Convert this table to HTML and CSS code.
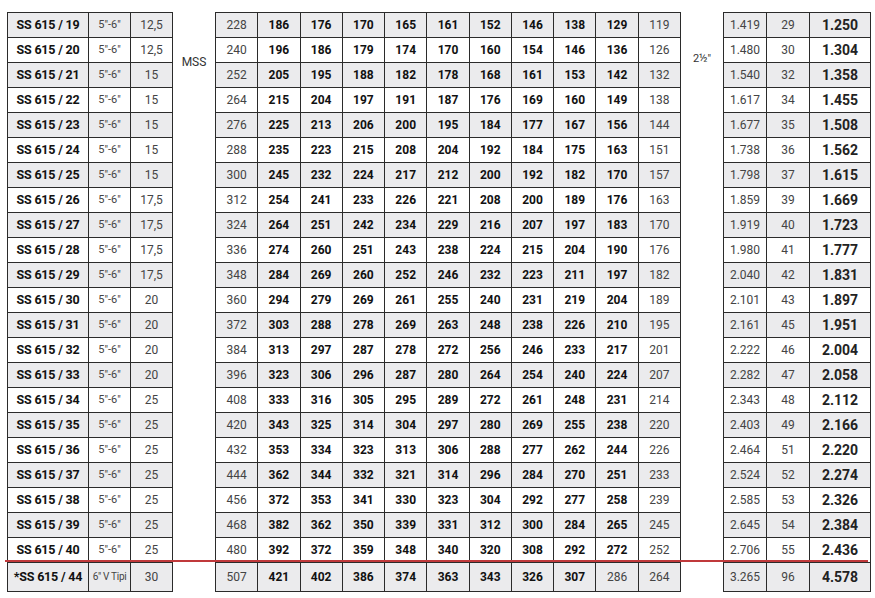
FILE: index.html
```html
<!DOCTYPE html>
<html>
<head>
<meta charset="utf-8">
<link rel="stylesheet" href="styles.css">
</head>
<body>
<div class="page">
  <table class="grid t1">
    <tr><td>SS 615 / 19</td><td>5"-6"</td><td>12,5</td></tr>
    <tr><td>SS 615 / 20</td><td>5"-6"</td><td>12,5</td></tr>
    <tr><td>SS 615 / 21</td><td>5"-6"</td><td>15</td></tr>
    <tr><td>SS 615 / 22</td><td>5"-6"</td><td>15</td></tr>
    <tr><td>SS 615 / 23</td><td>5"-6"</td><td>15</td></tr>
    <tr><td>SS 615 / 24</td><td>5"-6"</td><td>15</td></tr>
    <tr><td>SS 615 / 25</td><td>5"-6"</td><td>15</td></tr>
    <tr><td>SS 615 / 26</td><td>5"-6"</td><td>17,5</td></tr>
    <tr><td>SS 615 / 27</td><td>5"-6"</td><td>17,5</td></tr>
    <tr><td>SS 615 / 28</td><td>5"-6"</td><td>17,5</td></tr>
    <tr><td>SS 615 / 29</td><td>5"-6"</td><td>17,5</td></tr>
    <tr><td>SS 615 / 30</td><td>5"-6"</td><td>20</td></tr>
    <tr><td>SS 615 / 31</td><td>5"-6"</td><td>20</td></tr>
    <tr><td>SS 615 / 32</td><td>5"-6"</td><td>20</td></tr>
    <tr><td>SS 615 / 33</td><td>5"-6"</td><td>20</td></tr>
    <tr><td>SS 615 / 34</td><td>5"-6"</td><td>25</td></tr>
    <tr><td>SS 615 / 35</td><td>5"-6"</td><td>25</td></tr>
    <tr><td>SS 615 / 36</td><td>5"-6"</td><td>25</td></tr>
    <tr><td>SS 615 / 37</td><td>5"-6"</td><td>25</td></tr>
    <tr><td>SS 615 / 38</td><td>5"-6"</td><td>25</td></tr>
    <tr><td>SS 615 / 39</td><td>5"-6"</td><td>25</td></tr>
    <tr><td>SS 615 / 40</td><td>5"-6"</td><td>25</td></tr>
    <tr class="last"><td>*SS 615 / 44</td><td class="tipi">6" V Tipi</td><td>30</td></tr>
  </table>

  <div class="label"><span>MSS</span></div>

  <table class="grid t2">
    <tr><td>228</td><td>186</td><td>176</td><td>170</td><td>165</td><td>161</td><td>152</td><td>146</td><td>138</td><td>129</td><td>119</td></tr>
    <tr><td>240</td><td>196</td><td>186</td><td>179</td><td>174</td><td>170</td><td>160</td><td>154</td><td>146</td><td>136</td><td>126</td></tr>
    <tr><td>252</td><td>205</td><td>195</td><td>188</td><td>182</td><td>178</td><td>168</td><td>161</td><td>153</td><td>142</td><td>132</td></tr>
    <tr><td>264</td><td>215</td><td>204</td><td>197</td><td>191</td><td>187</td><td>176</td><td>169</td><td>160</td><td>149</td><td>138</td></tr>
    <tr><td>276</td><td>225</td><td>213</td><td>206</td><td>200</td><td>195</td><td>184</td><td>177</td><td>167</td><td>156</td><td>144</td></tr>
    <tr><td>288</td><td>235</td><td>223</td><td>215</td><td>208</td><td>204</td><td>192</td><td>184</td><td>175</td><td>163</td><td>151</td></tr>
    <tr><td>300</td><td>245</td><td>232</td><td>224</td><td>217</td><td>212</td><td>200</td><td>192</td><td>182</td><td>170</td><td>157</td></tr>
    <tr><td>312</td><td>254</td><td>241</td><td>233</td><td>226</td><td>221</td><td>208</td><td>200</td><td>189</td><td>176</td><td>163</td></tr>
    <tr><td>324</td><td>264</td><td>251</td><td>242</td><td>234</td><td>229</td><td>216</td><td>207</td><td>197</td><td>183</td><td>170</td></tr>
    <tr><td>336</td><td>274</td><td>260</td><td>251</td><td>243</td><td>238</td><td>224</td><td>215</td><td>204</td><td>190</td><td>176</td></tr>
    <tr><td>348</td><td>284</td><td>269</td><td>260</td><td>252</td><td>246</td><td>232</td><td>223</td><td>211</td><td>197</td><td>182</td></tr>
    <tr><td>360</td><td>294</td><td>279</td><td>269</td><td>261</td><td>255</td><td>240</td><td>231</td><td>219</td><td>204</td><td>189</td></tr>
    <tr><td>372</td><td>303</td><td>288</td><td>278</td><td>269</td><td>263</td><td>248</td><td>238</td><td>226</td><td>210</td><td>195</td></tr>
    <tr><td>384</td><td>313</td><td>297</td><td>287</td><td>278</td><td>272</td><td>256</td><td>246</td><td>233</td><td>217</td><td>201</td></tr>
    <tr><td>396</td><td>323</td><td>306</td><td>296</td><td>287</td><td>280</td><td>264</td><td>254</td><td>240</td><td>224</td><td>207</td></tr>
    <tr><td>408</td><td>333</td><td>316</td><td>305</td><td>295</td><td>289</td><td>272</td><td>261</td><td>248</td><td>231</td><td>214</td></tr>
    <tr><td>420</td><td>343</td><td>325</td><td>314</td><td>304</td><td>297</td><td>280</td><td>269</td><td>255</td><td>238</td><td>220</td></tr>
    <tr><td>432</td><td>353</td><td>334</td><td>323</td><td>313</td><td>306</td><td>288</td><td>277</td><td>262</td><td>244</td><td>226</td></tr>
    <tr><td>444</td><td>362</td><td>344</td><td>332</td><td>321</td><td>314</td><td>296</td><td>284</td><td>270</td><td>251</td><td>233</td></tr>
    <tr><td>456</td><td>372</td><td>353</td><td>341</td><td>330</td><td>323</td><td>304</td><td>292</td><td>277</td><td>258</td><td>239</td></tr>
    <tr><td>468</td><td>382</td><td>362</td><td>350</td><td>339</td><td>331</td><td>312</td><td>300</td><td>284</td><td>265</td><td>245</td></tr>
    <tr><td>480</td><td>392</td><td>372</td><td>359</td><td>348</td><td>340</td><td>320</td><td>308</td><td>292</td><td>272</td><td>252</td></tr>
    <tr class="last"><td>507</td><td>421</td><td>402</td><td>386</td><td>374</td><td>363</td><td>343</td><td>326</td><td>307</td><td class="n">286</td><td>264</td></tr>
  </table>

  <div class="label label2"><span>2½"</span></div>

  <table class="grid t3">
    <tr><td>1.419</td><td>29</td><td>1.250</td></tr>
    <tr><td>1.480</td><td>30</td><td>1.304</td></tr>
    <tr><td>1.540</td><td>32</td><td>1.358</td></tr>
    <tr><td>1.617</td><td>34</td><td>1.455</td></tr>
    <tr><td>1.677</td><td>35</td><td>1.508</td></tr>
    <tr><td>1.738</td><td>36</td><td>1.562</td></tr>
    <tr><td>1.798</td><td>37</td><td>1.615</td></tr>
    <tr><td>1.859</td><td>39</td><td>1.669</td></tr>
    <tr><td>1.919</td><td>40</td><td>1.723</td></tr>
    <tr><td>1.980</td><td>41</td><td>1.777</td></tr>
    <tr><td>2.040</td><td>42</td><td>1.831</td></tr>
    <tr><td>2.101</td><td>43</td><td>1.897</td></tr>
    <tr><td>2.161</td><td>45</td><td>1.951</td></tr>
    <tr><td>2.222</td><td>46</td><td>2.004</td></tr>
    <tr><td>2.282</td><td>47</td><td>2.058</td></tr>
    <tr><td>2.343</td><td>48</td><td>2.112</td></tr>
    <tr><td>2.403</td><td>49</td><td>2.166</td></tr>
    <tr><td>2.464</td><td>51</td><td>2.220</td></tr>
    <tr><td>2.524</td><td>52</td><td>2.274</td></tr>
    <tr><td>2.585</td><td>53</td><td>2.326</td></tr>
    <tr><td>2.645</td><td>54</td><td>2.384</td></tr>
    <tr><td>2.706</td><td>55</td><td>2.436</td></tr>
    <tr class="last"><td>3.265</td><td>96</td><td>4.578</td></tr>
  </table>

  <div class="redline"></div>
</div>
</body>
</html>
```

FILE: styles.css
```css
html, body {
  margin: 0;
  padding: 0;
  background: #ffffff;
}

.page {
  position: relative;
  display: flex;
  align-items: flex-start;
  padding: 12px 0 0 7px;
  font-family: "Roboto", "Liberation Sans", sans-serif;
  color: #111;
}

.grid {
  border-collapse: collapse;
  table-layout: fixed;
}

.grid td {
  border: 1px solid #2b2b2b;
  height: 24px;
  padding: 0;
  text-align: center;
  vertical-align: middle;
  font-size: 12px;
  line-height: 14px;
  white-space: nowrap;
}

.grid tr:nth-child(odd) td {
  background: #ebebed;
}

.grid tr.last td {
  height: 28px;
}

/* Table 1 */
.t1 {
  width: 166px;
}
.t1 td:nth-child(1) {
  width: 80px;
  font-weight: 700;
  font-size: 12.5px;
  letter-spacing: -0.2px;
}
.t1 td:nth-child(2) {
  width: 41px;
  color: #444;
  font-size: 11px;
}
.t1 td:nth-child(3) {
  color: #444;
}
.t1 td.tipi {
  font-size: 10px;
  letter-spacing: -0.3px;
}

/* Labels between tables */
.label {
  width: 42px;
  flex: none;
  height: 100px;
  display: flex;
  align-items: center;
  justify-content: center;
  font-size: 12px;
  color: #333;
}
.label2 {
  height: 92px;
  font-size: 11px;
}

/* Table 2 */
.t2 {
  width: 466px;
}
.t2 td {
  font-weight: 700;
}
.t2 td:first-child,
.t2 td:last-child,
.t2 td.n {
  font-weight: 400;
  color: #444;
}

/* Table 3 */
.t3 {
  width: 148px;
}
.t3 td:nth-child(1) {
  width: 42px;
  color: #444;
}
.t3 td:nth-child(2) {
  width: 42px;
  color: #444;
}
.t3 td:nth-child(3) {
  font-weight: 700;
  font-size: 14px;
  color: #222;
}

.redline {
  position: absolute;
  left: 5px;
  width: 863px;
  top: 560px;
  height: 2px;
  background: #c0393b;
}
```
